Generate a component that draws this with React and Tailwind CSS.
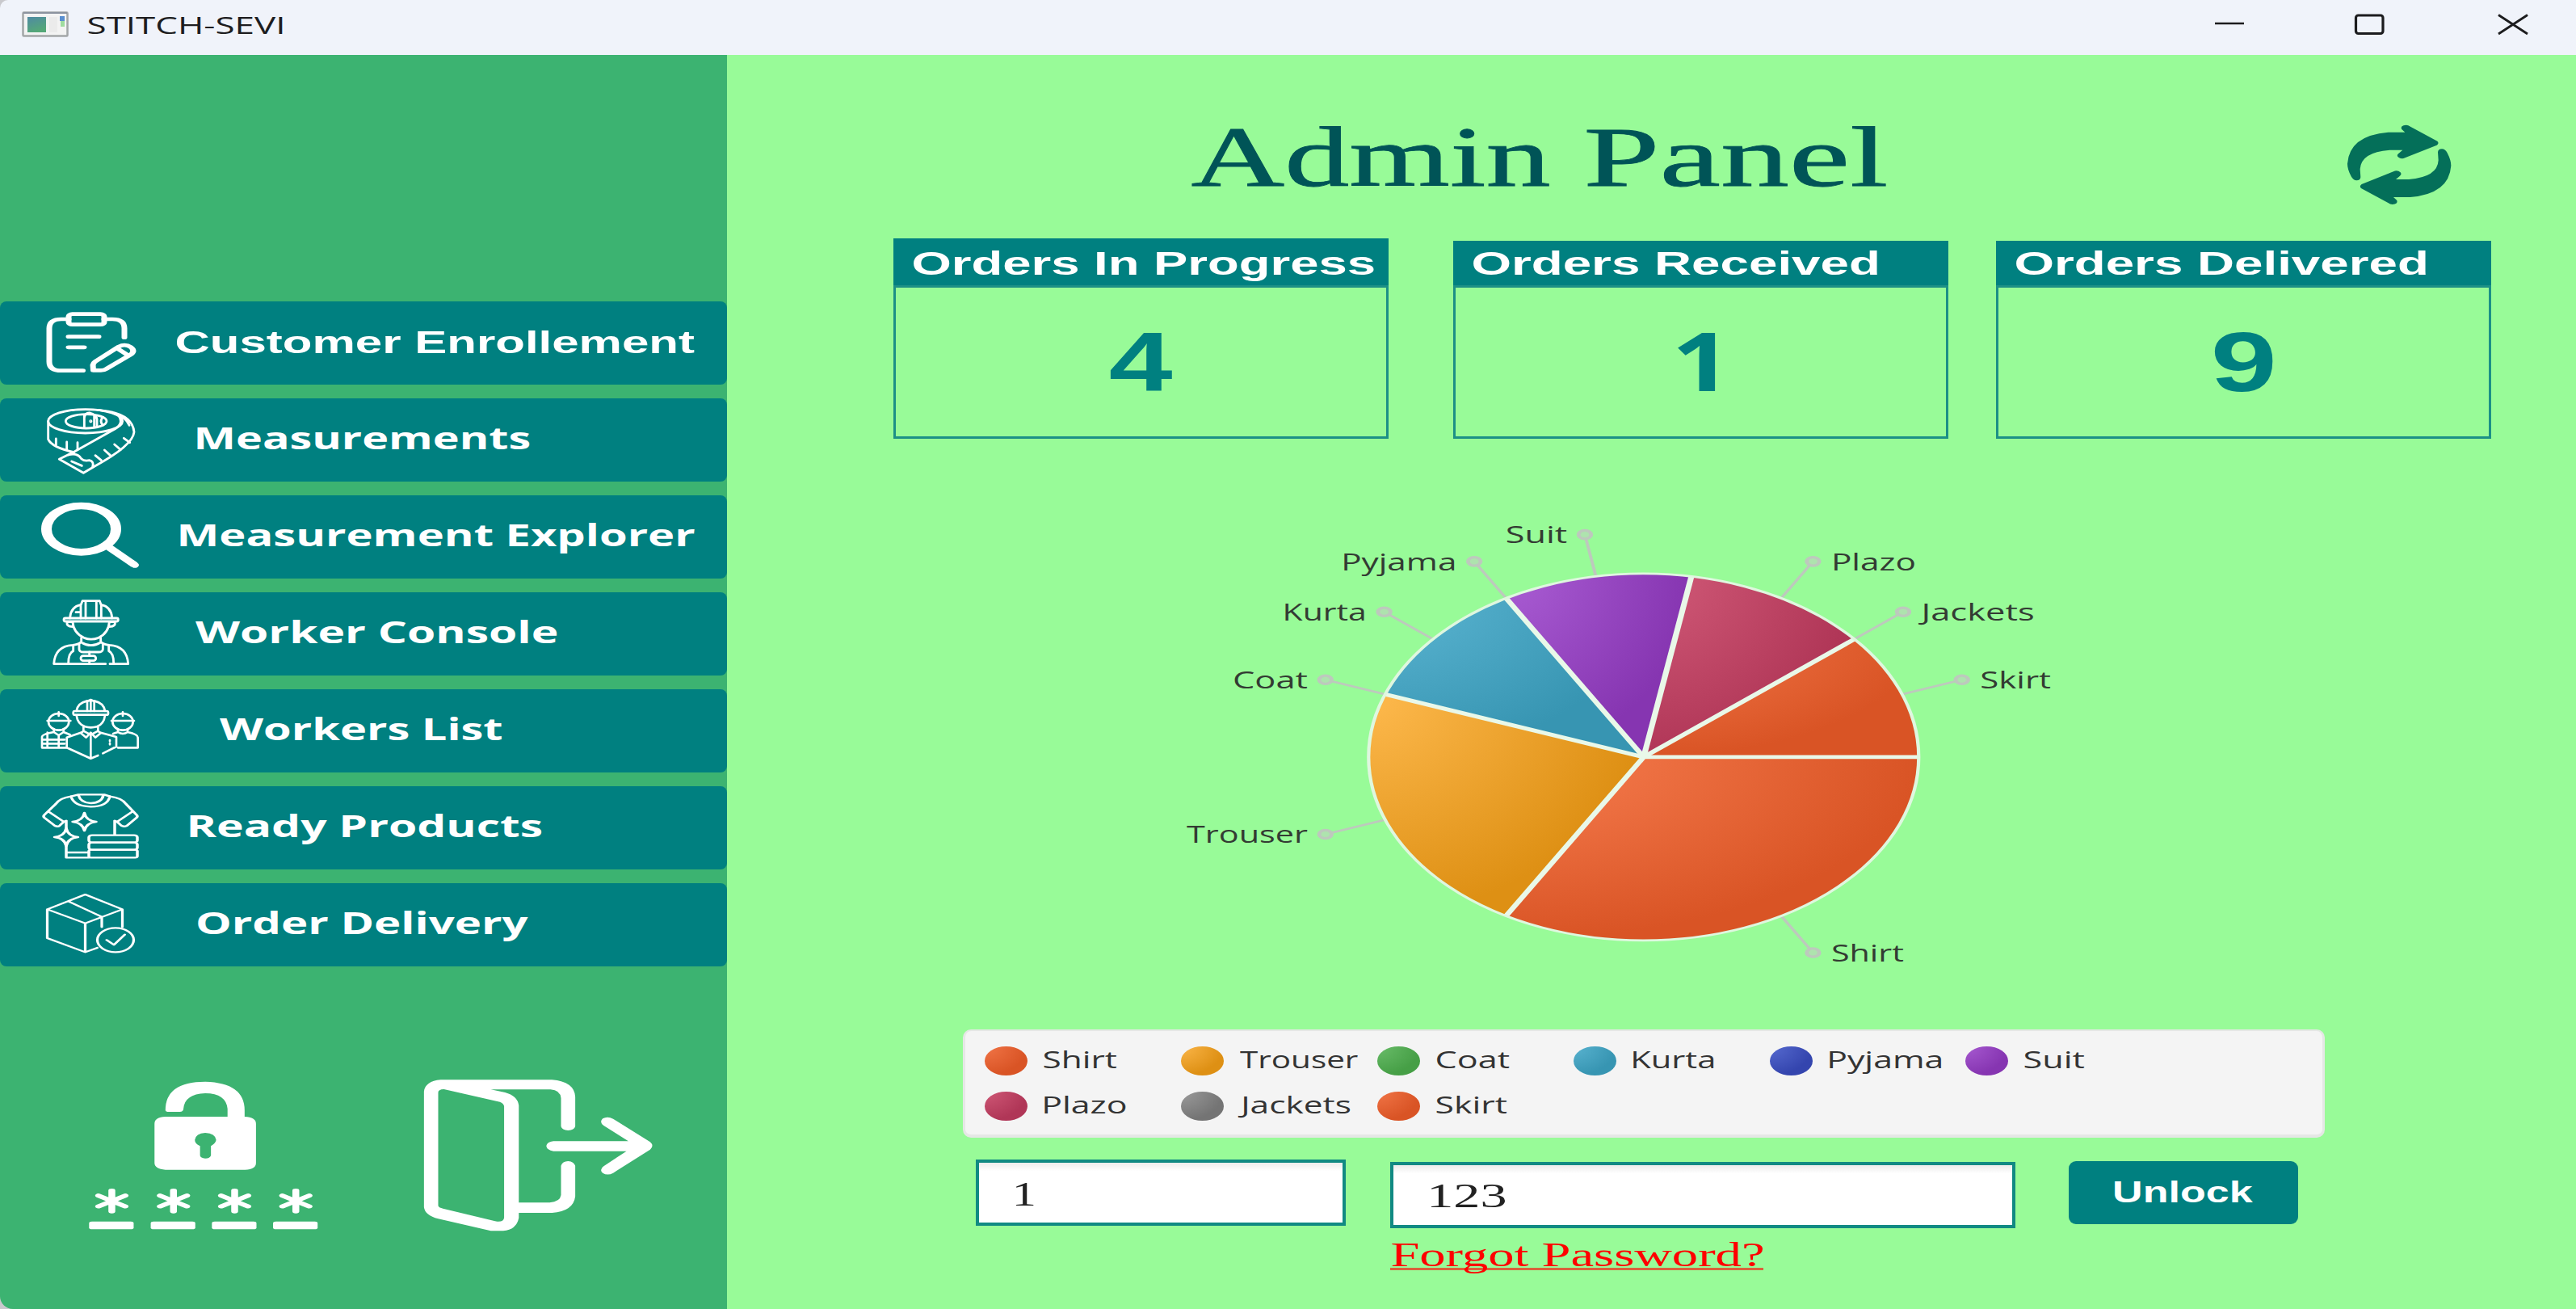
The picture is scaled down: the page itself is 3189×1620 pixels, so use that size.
import React, { useLayoutEffect, useRef, useState } from "react";

const ARIAL = "font-['Liberation_Sans',sans-serif] font-bold";
const SEGOE = "font-['Open_Sans',sans-serif]";
const SERIF = "font-['Liberation_Serif',serif]";

/* One line of text whose drawn glyphs are stretched to an exact width. */
function Stretch({ w, className, children }) {
  const ref = useRef(null);
  const [transform, setTransform] = useState("none");
  useLayoutEffect(() => {
    const cs = getComputedStyle(ref.current);
    const ctx = document.createElement("canvas").getContext("2d");
    ctx.font = `${cs.fontWeight} ${cs.fontSize} ${cs.fontFamily}`;
    const m = ctx.measureText(children);
    const s = w / (m.actualBoundingBoxLeft + m.actualBoundingBoxRight);
    setTransform(`translateX(${m.actualBoundingBoxLeft * s}px) scaleX(${s})`);
  }, [w, children]);
  return (
    <span className={`block shrink-0 text-left ${className}`} style={{ width: w }}>
      <span ref={ref} className="inline-block origin-left whitespace-nowrap align-top" style={{ transform }}>
        {children}
      </span>
    </span>
  );
}

const STAR = "q4 29 29 33 q-25 4 -29 33 q-4 -29 -29 -33 q25 -4 29 -33z";

const ICONS = {
  clipboard: (
    <g transform="scale(1.5 1)" strokeWidth="14">
      <path d="M90 66H72Q42 66 42 100V224Q42 257 72 257H125M178 66H198Q228 66 228 100V134" />
      <rect x="90" y="47" width="88" height="39" rx="9" />
      <path d="M90 131H164M90 170.500H128" />
      <path d="M151 256L150 236Q151 228 156 223L214 168Q230 156 244 170Q256 184 243 198L184 250Q178 256 170 256ZM214 178L236 199" />
    </g>
  ),
  tape: (
    <g transform="translate(0 10)" strokeWidth="8.500">
      <ellipse cx="197" cy="75" rx="138" ry="44" />
      <ellipse cx="200" cy="75" rx="76" ry="26" />
      <path d="M193 97V62Q195 45 212 44Q238 50 240 68V97M193 52V97M230 52V97M262 60Q248 75 262 90" />
      <circle cx="217" cy="75" r="2" fill="white" />
      <path d="M59 75V142Q72 172 155 190M88 168V140M128 178V152M168 180V154" />
      <path d="M250 34Q372 45 378 115Q374 165 228 244L190 267L100 216L156 188L305 105Q340 84 322 56M300 45Q350 60 360 90" />
      <path d="M134 200Q166 190 182 214Q192 224 212 220Q230 224 224 244M146 224L184 240M234 202L256 220M268 182L290 202M305 161L328 181M340 138L362 154" />
    </g>
  ),
  magnifier: (
    <g transform="scale(1.5 1)">
      <circle cx="121" cy="125" r="86" strokeWidth="26" />
      <path d="M184 187L253 258" strokeWidth="22" strokeLinecap="butt" />
      <path d="M244 249L254 259" strokeWidth="20" />
    </g>
  ),
  worker: (
    <g transform="translate(0 4)" strokeWidth="8.500">
      <rect x="117" y="92" width="202" height="12" rx="6" />
      <path d="M140 92Q142 50 180 42V92M296 92Q294 50 256 42V92M180 44L186 28H250L256 44M198 32V92M238 32V92M180 70H162" />
      <path d="M150 106Q152 146 192 165Q218 176 246 165Q284 146 286 106" />
      <path d="M148 106H130Q124 122 150 124M288 106H306Q312 122 286 124" />
      <path d="M182 166V182Q218 204 254 182V166M182 180Q170 190 150 192Q84 196 80 262H272M288 262H356Q352 196 286 192Q266 190 254 180" />
      <path d="M152 194V214Q134 222 134 260M284 194V214Q302 222 302 260M174 188V208Q176 218 190 218H246Q260 218 262 208V188" />
      <rect x="180" y="232" width="56" height="18" rx="9" />
      <path d="M212 218V232M212 250V262" />
    </g>
  ),
  team: (
    <g transform="translate(0 9)" strokeWidth="8">
      <rect x="152" y="72" width="130" height="14" rx="6" />
      <path d="M164 72Q168 42 204 34V72M270 72Q266 42 230 34V72M204 36L217 30L230 36M217 32V72" />
      <path d="M164 88Q168 120 196 130Q217 136 240 130Q266 120 270 88M190 130V146L217 160L244 146V130" />
      <path d="M190 146L180 154L200 170L217 152L234 170L254 154L244 146M180 152L128 170V208L217 248L244 237M262 229L312 204V168L254 152M217 156V246M288 180V184M288 192V196" />
      <ellipse cx="98" cy="112" rx="38" ry="31" />
      <path d="M56 108H142M98 76V90M80 140V150L98 162L116 150V140M80 150Q36 158 36 168V208H126M36 178H120M36 193H120M98 162V206M56 152V208M116 150L140 160" />
      <ellipse cx="336" cy="112" rx="38" ry="31" />
      <path d="M294 108H378M336 76V90M318 140V150Q336 162 354 150V140M354 150Q392 158 392 170V208H318M318 150L300 156" />
    </g>
  ),
  shirt: (
    <g transform="scale(1.5 1)" strokeWidth="7">
      <path d="M96 38L114 31H178L192 38Q186 76 145 76Q102 74 96 38ZM114 33Q120 62 145 63Q172 62 176 33" />
      <path d="M96 38Q68 44 58 66L30 106Q26 112 30 117L56 147Q63 152 68 146L78 132L42 96M78 132L84 128V160M84 218V265H140M84 246H140" />
      <path d="M192 38Q222 44 232 66L258 106Q262 112 258 117L234 147Q226 152 220 146L210 132L246 96M210 132L204 128V179" />
      <rect x="140" y="182" width="120" height="27" rx="8" />
      <rect x="140" y="209" width="120" height="27" rx="8" />
      <rect x="140" y="236" width="120" height="29" rx="5" />
      <path d={`M129 99${STAR}`} />
      <path d={`M84 156${STAR}`} />
    </g>
  ),
  parcel: (
    <g transform="scale(1.5 1)" strokeWidth="6.500">
      <path d="M161 240L131 256L37 204V97L131 42L223 97V163M37 97L131 149L223 97M131 149V256M90 68L172 125V163" />
      <circle cx="206" cy="211" r="45" />
      <path d="M184 211L202 229L229 191" />
    </g>
  ),
};

const MENU = [
  { icon: "clipboard", label: "Customer Enrollement", w: 642, pad: "pl-[38px]", font: `${ARIAL} text-[39px] leading-[101px]` },
  { icon: "tape", label: "Measurements", w: 411, pad: "pl-[64px]" },
  { icon: "magnifier", label: "Measurement Explorer", w: 638, pad: "pl-[43px]" },
  { icon: "worker", label: "Worker Console", w: 448, pad: "pl-[62px]" },
  { icon: "team", label: "Workers List", w: 349, pad: "pl-[92px]" },
  { icon: "shirt", label: "Ready Products", w: 435, pad: "pl-[55px]" },
  { icon: "parcel", label: "Order Delivery", w: 410, pad: "pl-[65px]" },
];

const COLORS = {
  Shirt: ["#f17547", "#d95425"],
  Trouser: ["#fbb649", "#de9014"],
  Coat: ["#6abd6a", "#469f46"],
  Kurta: ["#59b3d0", "#3795b2"],
  Pyjama: ["#576bd0", "#3445ae"],
  Suit: ["#a75ad1", "#8635b1"],
  Plazo: ["#cf5876", "#b03657"],
  Jackets: ["#9b9b9b", "#747474"],
  Skirt: ["#f17547", "#d95425"],
};

const LEGEND = [
  ["Shirt", 90], ["Trouser", 146], ["Coat", 90], ["Kurta", 101], ["Pyjama", 140], ["Suit", 74],
  ["Plazo", 102], ["Jackets", 139], ["Skirt", 87],
];

const SLICES = [
  ["Shirt", 0, 120, 60], ["Trouser", 120, 200, 100], ["Coat", 200, 200, 62], ["Kurta", 200, 240, 69.500],
  ["Pyjama", 240, 240, 95.500], ["Suit", 240, 280, 51], ["Plazo", 280, 320, 70], ["Jackets", 320, 320, 93.500],
  ["Skirt", 320, 360, 58.500],
];

const R = 227;
const polar = (deg, r) => [r * Math.cos((deg * Math.PI) / 180), r * Math.sin((deg * Math.PI) / 180)];

function PieChart() {
  return (
    <svg className="ml-[540px] mt-[77px] block h-[600px] w-[1160px] shrink-0" viewBox="-396.5 -316.9 773.3 600" preserveAspectRatio="none">
      <defs>
        {Object.entries(COLORS).map(([name, [light, dark]]) => (
          <radialGradient key={name} id={`pie-${name}`} cx="0" cy="0" r="1">
            <stop offset={name === "Shirt" ? "0.22" : "0.08"} stopColor={light} />
            <stop offset="1" stopColor={dark} />
          </radialGradient>
        ))}
      </defs>
      {SLICES.map(([name, from, to, len]) => {
        const mid = (from + to) / 2;
        const [x0, y0] = polar(mid, R);
        const [x1, y1] = polar(mid, 279.500);
        const right = x1 > 0;
        return (
          <g key={name}>
            <path d={`M${x0} ${y0}L${x1} ${y1}`} stroke="#bdc9bd" strokeWidth="2.600" />
            <circle cx={x1} cy={y1} r="5.200" fill="#aee3ae" stroke="#bdc9bd" strokeWidth="3.200" />
            <text
              x={x1 + (right ? 15 : -14.500)}
              y={y1 + 10.800}
              textAnchor={right ? "start" : "end"}
              textLength={len}
              lengthAdjust="spacingAndGlyphs"
              className="fill-[#333b33] font-['Open_Sans',sans-serif] text-[30px]"
            >
              {name}
            </text>
          </g>
        );
      })}
      {SLICES.filter(([, from, to]) => to > from).map(([name, from, to]) => {
        const [ax, ay] = polar(from, R);
        const [bx, by] = polar(to, R);
        return <path key={name} d={`M0 0L${ax} ${ay}A${R} ${R} 0 0 1 ${bx} ${by}Z`} fill={`url(#pie-${name})`} />;
      })}
      {[0, 120, 200, 240, 280, 320].map((a) => {
        const [x, y] = polar(a, R);
        return <path key={a} d={`M0 0L${x} ${y}`} stroke="#e9f8e9" strokeWidth="4.800" />;
      })}
      <circle r={R} fill="none" stroke="#dff7df" strokeWidth="2.800" />
    </svg>
  );
}

function Card({ title, titleW, tall, children }) {
  return (
    <div className={`flex w-[613px] flex-col border-[3px] border-[#1c9086] ${tall ? "mt-[1px] h-[248px]" : "mt-[3.500px] h-[245.500px]"}`}>
      <div className={`-mx-[3px] -mt-[3px] flex shrink-0 border-b-[3px] border-[#1c9086] bg-[#008080] pl-[24px] ${tall ? "h-[61px] pt-[11px]" : "h-[58.500px] pt-[8.500px]"}`}>
        <Stretch w={titleW} className={`${ARIAL} text-[40px] leading-[40px] text-white`}>{title}</Stretch>
      </div>
      <div className="flex justify-center pt-[41px]">{children}</div>
    </div>
  );
}

function TitleBar() {
  return (
    <header className="flex h-[68px] shrink-0 items-start rounded-tl-[10px] bg-[#f0f3fa]">
      <svg className="ml-[27px] mt-[14px] h-[32px] w-[58px]" viewBox="0 0 58 32" preserveAspectRatio="none">
        <defs>
          <linearGradient id="app" x1="0" y1="0" x2=".4" y2="1">
            <stop offset="0" stopColor="#4f8aa3" />
            <stop offset="1" stopColor="#55a878" />
          </linearGradient>
        </defs>
        <rect x="1.500" y="1.500" width="55" height="29" rx="1" fill="#f3f3f3" stroke="#a3a6a8" strokeWidth="2.500" />
        <path d="M2 2H56" stroke="#8b93a0" strokeWidth="2" />
        <rect x="7" y="7" width="23" height="19" fill="url(#app)" />
        <rect x="34" y="7" width="10" height="19" fill="#ebebeb" />
        <rect x="47" y="6" width="6" height="6" fill="#5a8fd0" />
        <rect x="48" y="12" width="5" height="7" fill="#9fdc9f" />
      </svg>
      <div className="ml-[24px] pt-[14.500px]">
        <Stretch w={241} className={`${SEGOE} text-[30px] leading-[32px] text-[#1d1d1f]`}>STITCH-SEVI</Stretch>
      </div>
      <svg className="ml-auto mr-[58px] mt-[16px] h-[28px] w-[390px]" viewBox="0 0 390 28" fill="none" stroke="#1c1c1e">
        <path d="M1 13H37" strokeWidth="2.500" />
        <rect x="175.500" y="3" width="33.500" height="22.500" rx="3" strokeWidth="3.200" />
        <path d="M352 2.500L388 26M388 2.500L352 26" strokeWidth="2.800" />
      </svg>
    </header>
  );
}

function Sidebar() {
  return (
    <aside className="flex w-[900px] shrink-0 flex-col rounded-bl-[16px] bg-[#3cb371] pt-[304.500px]">
      <nav className="flex flex-col gap-[17.100px]">
        {MENU.map((m) => (
          <button key={m.label} className="flex h-[103px] w-full items-start rounded-[8px] bg-[#008080] pl-[40px] text-left">
            <svg className="h-[103px] w-[140px] shrink-0" viewBox="0 0 420 309" fill="none" stroke="white" strokeLinecap="round" strokeLinejoin="round">
              {ICONS[m.icon]}
            </svg>
            <span className={m.pad}>
              <Stretch w={m.w} className={`text-white ${m.font || `${SEGOE} font-bold text-[37px] leading-[97px]`}`}>{m.label}</Stretch>
            </span>
          </button>
        ))}
      </nav>
      <div className="ml-[105px] mt-[137.500px] flex gap-[120px]">
        <svg className="h-[190px] w-[293.500px]" viewBox="180 160 500 570" preserveAspectRatio="none">
          <path d="M350 280Q350 174 434 174Q517 178 517 280V304Q541 306 541 330V476Q541 500 518 501H350Q327 498 327 476V330Q327 306 350 304H481V275Q478 218 434 217Q390 220 388 275Q388 286 380 286H358Q350 286 350 280Z" fill="white" />
          <path d="M412 390Q414 366 434 364Q455 366 457 390Q456 402 446 413V448Q444 459 434 459Q424 458 423 448V413Q412 404 412 390Z" fill="#3cb371" />
          {[237, 367, 496, 625].map((x) => (
            <g key={x}>
              <rect x={x - 48} y="693" width="94" height="29" rx="6" fill="white" />
              <path d={`M${x} 578V656M${x - 28} 597L${x + 28} 637M${x - 28} 637L${x + 28} 597`} stroke="white" strokeWidth="14.500" strokeLinecap="round" />
            </g>
          ))}
        </svg>
        <svg className="h-[190px] w-[293.500px]" viewBox="885 160 500 570" preserveAspectRatio="none">
          <path d="M930 167H1165Q1212 174 1214 230V340Q1212 354 1199 355Q1186 353 1184 340V235Q1182 205 1162 203H1036L1066 214Q1092 226 1095 262V623H1160Q1182 620 1184 595V486Q1187 470 1199 469Q1211 471 1214 486V600Q1210 655 1165 661H1095V680Q1090 724 1062 728H1036L925 683Q897 670 895 640V210Q898 172 930 167ZM937 202Q925 203 925 214V635Q927 643 935 645L1045 692Q1062 698 1064 680V265Q1063 254 1055 249Z" fill="white" fillRule="evenodd" />
          <path d="M1168 395H1326L1274 337Q1264 324 1272 311Q1282 301 1294 312L1372 398Q1381 412 1372 426L1294 513Q1282 524 1272 513Q1264 500 1274 488L1322 432H1168Q1154 428 1153 413Q1154 398 1168 395Z" fill="white" />
        </svg>
      </div>
    </aside>
  );
}

const ARROW =
  "M82 247Q70 247 62 232Q48 205 48 185Q55 80 200 68H262L249 56Q244 42 266 41Q274 41 282 47L382 101Q390 109 380 116L262 163Q248 170 236 160Q230 153 238 147L253 134H205Q98 142 95 205L97 235Q96 247 82 247Z";

function Field({ value, w, className, textClass }) {
  return (
    <div className={`h-[82px] border-4 border-[#118a83] bg-white bg-linear-to-b from-[#ececec] via-white via-[14%] to-white ${className}`}>
      <div className={textClass}>
        <Stretch w={w} className={`${SERIF} text-[42px] leading-[42px] text-[#222]`}>{value}</Stretch>
      </div>
    </div>
  );
}

export default function App() {
  const title = `${SERIF} text-[106px] leading-[106px] text-[#005457] [-webkit-text-stroke:0.8px_#005457]`;
  const figure = `${ARIAL} text-[103px] leading-[103px] text-[#008080]`;
  return (
    <div className="flex h-[1620px] w-[3189px] flex-col overflow-hidden bg-[#c9c9cd]">
      <TitleBar />
      <div className="flex min-h-0 flex-1">
        <Sidebar />
        <main className="flex flex-1 flex-col bg-[#98fb98] pt-[73px]">
          <div className="flex h-[153px] shrink-0 items-start pl-[575.500px]">
            <h1 className="flex gap-[47px] pt-[1px]">
              <Stretch w={442} className={title}>Admin</Stretch>
              <Stretch w={370} className={title}>Panel</Stretch>
            </h1>
            <svg className="ml-[555.500px] h-[120px] w-[160px]" viewBox="0 0 480 360" fill="#046f59">
              <path d={ARROW} />
              <path d={ARROW} transform="rotate(180 240.5 188.5)" />
            </svg>
          </div>
          <div className="flex h-[249px] shrink-0 items-start pl-[206px]">
            <Card title="Orders In Progress" titleW={571} tall>
              <Stretch w={77} className={figure}>4</Stretch>
            </Card>
            <div className="w-[80px]" />
            <Card title="Orders Received" titleW={501}>
              <Stretch w={48} className={`-mt-[3px] mr-[12px] text-[100px] font-bold leading-[103px] text-[#008080] ${SEGOE}`}>1</Stretch>
            </Card>
            <div className="w-[59px]" />
            <Card title="Orders Delivered" titleW={508}>
              <Stretch w={73} className={figure}>9</Stretch>
            </Card>
          </div>
          <PieChart />
          <ul className="ml-[292px] mt-[54px] grid h-[134px] w-[1686px] shrink-0 grid-cols-[repeat(6,242.900px)] content-start gap-y-[20px] rounded-[10px] border-x-[3px] border-b-[4px] border-t-2 border-[#e5e7e5] bg-[#f4f4f4] pl-[24px] pt-[18.500px]">
            {LEGEND.map(([name, w]) => (
              <li key={name} className="flex h-[36px]">
                <span
                  className={`h-[36px] w-[53px] shrink-0 rounded-[50%] ${name === "Jackets" ? "mr-[17px]" : "mr-[20px]"}`}
                  style={{ background: `radial-gradient(100% 100% at 0 0, ${COLORS[name][0]}, ${COLORS[name][1]})` }}
                />
                <Stretch w={w} className={`${SEGOE} text-[30px] leading-[32px] text-[#333]`}>{name}</Stretch>
              </li>
            ))}
          </ul>
          <div className="mt-[27px] flex items-start pl-[308px]">
            <Field value="1" w={23} className="w-[458px]" textClass="pl-[45px] pt-[18px]" />
            <div className="ml-[55px] flex w-[774px] flex-col pt-[3px]">
              <Field value="123" w={93} className="w-[774px]" textClass="pl-[46px] pt-[17px]" />
              <a className="mt-[12px] w-[462px] border-b-[3px] border-[#d9623d] pl-[2px]">
                <Stretch w={459} className={`${SERIF} h-[37px] text-[42px] leading-[42px] text-[#ff0000]`}>Forgot Password?</Stretch>
              </a>
            </div>
            <button className="ml-[65.500px] mt-[2px] flex h-[78px] w-[284px] rounded-[9px] bg-[#008080] pl-[57.500px] pt-[18.500px]">
              <Stretch w={172} className={`${ARIAL} text-[36px] leading-[40px] text-white`}>Unlock</Stretch>
            </button>
          </div>
        </main>
      </div>
    </div>
  );
}
